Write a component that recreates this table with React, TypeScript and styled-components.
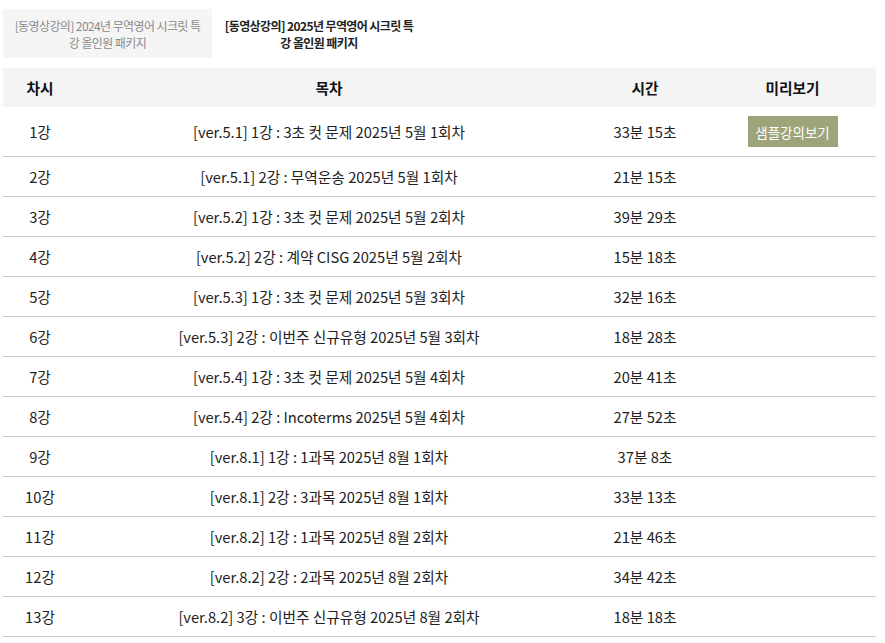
import React from "react";
import styled, { createGlobalStyle } from "styled-components";

const Global = createGlobalStyle`
  body { margin: 0; background: #fff; font-family: "Noto Sans CJK KR", "Noto Sans", sans-serif; color: #222; }
`;

const Page = styled.div`
  padding: 9px 9px 0 3px;
  width: 873px;
`;

const Tabs = styled.div`
  display: flex;
  margin-bottom: 10px;
`;

const Tab = styled.div<{ $active?: boolean }>`
  width: ${(p) => (p.$active ? 214 : 209)}px;
  height: 49px;
  box-sizing: border-box;
  padding: 0 11px;
  display: flex;
  align-items: center;
  justify-content: center;
  text-align: center;
  font-size: 12px;
  letter-spacing: -0.6px;
  line-height: 17px;
  background: ${(p) => (p.$active ? "#fff" : "#f5f5f5")};
  color: ${(p) => (p.$active ? "#222" : "#8a8a8a")};
  font-weight: ${(p) => (p.$active ? 700 : 400)};
`;

const Row = styled.div<{ $head?: boolean; $tall?: boolean }>`
  display: grid;
  grid-template-columns: 74px 504px 128px 167px;
  height: ${(p) => (p.$head ? 39 : p.$tall ? 49 : 39)}px;
  background: ${(p) => (p.$head ? "#f4f4f4" : "#fff")};
  border-bottom: ${(p) => (p.$head ? "none" : "1px solid #c8c8c8")};
  font-size: 14.7px;
  font-weight: ${(p) => (p.$head ? 700 : 400)};
  color: ${(p) => (p.$head ? "#111" : "#222")};
`;

const Cell = styled.div`
  display: flex;
  align-items: center;
  justify-content: center;
  white-space: nowrap;
`;

const SampleButton = styled.button`
  width: 90px;
  height: 31px;
  border: none;
  background: #9da47a;
  color: #fff;
  font-family: inherit;
  font-size: 13.5px;
  padding: 0;
  cursor: pointer;
`;

const rows: [string, string, string][] = [
  ["1강", "[ver.5.1] 1강 : 3초 컷 문제 2025년 5월 1회차", "33분 15초"],
  ["2강", "[ver.5.1] 2강 : 무역운송 2025년 5월 1회차", "21분 15초"],
  ["3강", "[ver.5.2] 1강 : 3초 컷 문제 2025년 5월 2회차", "39분 29초"],
  ["4강", "[ver.5.2] 2강 : 계약 CISG 2025년 5월 2회차", "15분 18초"],
  ["5강", "[ver.5.3] 1강 : 3초 컷 문제 2025년 5월 3회차", "32분 16초"],
  ["6강", "[ver.5.3] 2강 : 이번주 신규유형 2025년 5월 3회차", "18분 28초"],
  ["7강", "[ver.5.4] 1강 : 3초 컷 문제 2025년 5월 4회차", "20분 41초"],
  ["8강", "[ver.5.4] 2강 : Incoterms 2025년 5월 4회차", "27분 52초"],
  ["9강", "[ver.8.1] 1강 : 1과목 2025년 8월 1회차", "37분 8초"],
  ["10강", "[ver.8.1] 2강 : 3과목 2025년 8월 1회차", "33분 13초"],
  ["11강", "[ver.8.2] 1강 : 1과목 2025년 8월 2회차", "21분 46초"],
  ["12강", "[ver.8.2] 2강 : 2과목 2025년 8월 2회차", "34분 42초"],
  ["13강", "[ver.8.2] 3강 : 이번주 신규유형 2025년 8월 2회차", "18분 18초"],
];

export default function App() {
  return (
    <Page>
      <Global />
      <Tabs>
        <Tab>[동영상강의] 2024년 무역영어 시크릿 특강 올인원 패키지</Tab>
        <Tab $active>[동영상강의] 2025년 무역영어 시크릿 특강 올인원 패키지</Tab>
      </Tabs>
      <Row $head>
        <Cell>차시</Cell>
        <Cell>목차</Cell>
        <Cell>시간</Cell>
        <Cell>미리보기</Cell>
      </Row>
      {rows.map(([n, title, time], i) => (
        <Row key={n} $tall={i === 0}>
          <Cell>{n}</Cell>
          <Cell>{title}</Cell>
          <Cell>{time}</Cell>
          <Cell>{i === 0 && <SampleButton>샘플강의보기</SampleButton>}</Cell>
        </Row>
      ))}
    </Page>
  );
}
